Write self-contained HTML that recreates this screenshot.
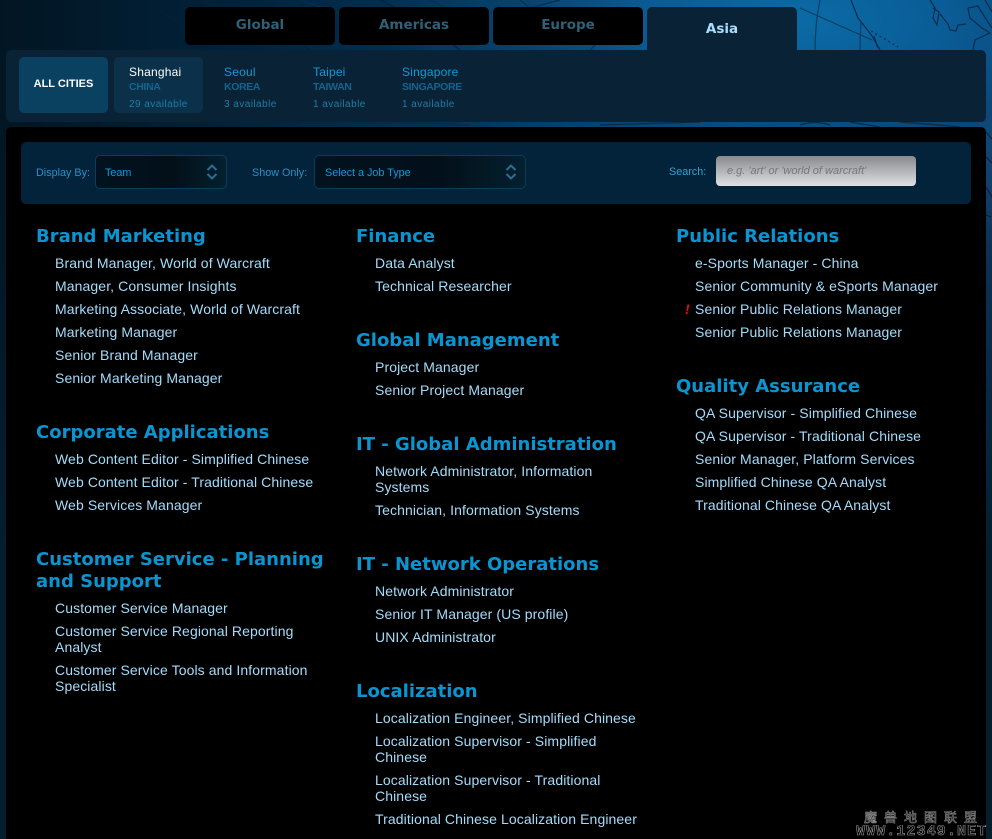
<!DOCTYPE html>
<html><head><meta charset="utf-8"><style>
*{box-sizing:border-box}
html,body{margin:0;padding:0;width:992px;height:839px;overflow:hidden}
body{background:#02111d;font-family:"Liberation Sans",sans-serif}
#w{position:absolute;left:0;top:0;width:992px;height:839px;overflow:hidden}
.a{position:absolute}
#bg{left:0;top:0;width:992px;height:839px;background:linear-gradient(rgba(3,22,38,0) 0,rgba(3,22,38,0) 130px,rgba(3,25,42,.5) 250px,rgba(4,30,46,1) 560px),radial-gradient(ellipse 420px 190px at 800px 20px,#0b6ba6 0%,#0a5c96 35%,rgba(8,70,115,.75) 65%,rgba(4,45,75,0) 100%),linear-gradient(90deg,#021522 0%,#01233c 25%,#02375c 50%,#084a7c 70%,#174a80 100%)}
.tab{position:absolute;top:7px;width:150px;height:38px;background:#000;border-radius:5px;text-align:center;font:bold 13.5px/37px "DejaVu Sans",sans-serif;color:#2f6078}
.asia{left:647px;height:43px;background:#0a2235;border-radius:5px 5px 0 0;color:#a9defc;line-height:44px}
#sub{left:6px;top:50px;width:980px;height:72px;background:#0a2235;border-radius:5px}
#all{left:19px;top:57px;width:89px;height:56px;background:#0a4060;border-radius:5px;color:#fff;font:bold 11px/55px "Liberation Sans",sans-serif;text-align:center}
#sel{left:114px;top:57px;width:89px;height:56px;background:#0b3049;border-radius:5px}
.c{position:absolute;top:65px;white-space:nowrap}
.c b{display:block;font:normal 12px/14px "Liberation Sans",sans-serif;color:#0a9bdc;letter-spacing:.2px}
.c i{display:block;font:normal bold 10.5px/14px "Liberation Sans",sans-serif;color:#14648c;margin-top:1px;letter-spacing:-.35px}
.c u{display:block;text-decoration:none;font:10px/14px "Liberation Sans",sans-serif;color:#1d7da6;margin-top:3.5px;letter-spacing:.45px}
#panel{left:6px;top:127px;width:980px;height:712px;background:#000;border-radius:5px 5px 0 0}
#bar{left:21px;top:142px;width:950px;height:62px;background:#02233a;border-radius:5px}
.l{position:absolute;font:10.8px/14px "Liberation Sans",sans-serif;color:#2a8fc4;white-space:nowrap}
.s{position:absolute;top:155px;height:34px;background:linear-gradient(90deg,#02121e,#03101a 60%,#04202f);border:1px solid #0b3d5a;border-radius:5px;color:#0a9be0;font:10.8px/34px "Liberation Sans",sans-serif;padding-left:10px}
.s svg{position:absolute;right:8px;top:7px}
#q{left:716px;top:156px;width:200px;height:30px;border-radius:4px;background:linear-gradient(#88898d,#e0e1e4);color:#73767a;font:italic 11px/31px "Liberation Sans",sans-serif;padding-left:11px}
.col{position:absolute;top:226px}
h3{margin:0;font:bold 18px/22px "DejaVu Sans",sans-serif;color:#0a95d1}
ul{list-style:none;margin:7px 0 29px;padding:0 0 0 19px}
li{font:14px/16px "Liberation Sans",sans-serif;color:#a3dcfb;margin:0;padding-bottom:7px;position:relative;letter-spacing:.1px}
li em{position:absolute;left:-10px;top:0;color:#e01010;font:italic bold 14px/16px "Liberation Sans",sans-serif}
#wm1{left:864px;top:810px;font:13px/14px "Noto Sans CJK SC",sans-serif;color:#000;-webkit-text-stroke:.6px #888;letter-spacing:7px;white-space:nowrap}
#wm2{left:856px;top:825px;font:bold 15px/14px "Liberation Mono",monospace;color:#000;-webkit-text-stroke:.6px #999;white-space:nowrap;letter-spacing:1.1px;width:132px;overflow:hidden}
</style></head><body><div id="w">
<div class="a" id="bg"></div>
<svg class="a" style="left:0;top:0" width="992" height="127" fill="none" stroke="#0b2c4c" stroke-width="1.2">
<path d="M800 8L872 40" stroke="#0a3d62"/>
<path d="M820 0Q815 25 815 50" stroke="#0a3d62"/>
<path d="M851 0L858 18L866 28L872 36L880 50"/>
<path d="M861 22Q860 36 860 50" stroke="#0a3d62"/>
<path d="M874 36L877 46L880 50" />
<path d="M871 31L898 47" stroke-dasharray="2 3"/>
<path d="M930 0L935 8L933 18L937 25L939 12L933 8M940 14L948 24L950 30L956 31L958 25L966 24"/>
<path d="M968 8L970 18L982 28L990 33L975 40L973 50M968 8L978 6L984 16L992 28"/>
<path d="M985 0L992 12"/>
<path d="M300 0L345 15M430 0L470 20M520 0L530 8L545 4L560 0M640 15L600 40L590 50" stroke="#063050"/>
<path d="M260 0Q280 30 310 50M380 0Q420 20 460 50M160 10Q190 30 210 50" stroke="#032238"/>
<path d="M300 125L400 122L470 125M600 125L700 122M800 125Q815 120 830 125M850 122L880 127M900 122Q930 124 960 127" stroke="#0a2a44"/>
</svg>
<svg class="a" style="left:986px;top:127px" width="6" height="100" fill="none" stroke="#1a1a2a"><path d="M0 5L6 12M0 30L6 36M0 60L6 70M0 88L5 90"/></svg>
<div class="tab" style="left:185px">Global</div>
<div class="tab" style="left:339px">Americas</div>
<div class="tab" style="left:493px">Europe</div>
<div class="tab asia">Asia</div>
<div class="a" id="sub"></div>
<div class="a" id="all">ALL CITIES</div>
<div class="a" id="sel"></div>
<div class="c" style="left:129px"><b style="color:#fff">Shanghai</b><i>CHINA</i><u>29 available</u></div>
<div class="c" style="left:224px"><b>Seoul</b><i>KOREA</i><u>3 available</u></div>
<div class="c" style="left:313px"><b>Taipei</b><i>TAIWAN</i><u>1 available</u></div>
<div class="c" style="left:402px"><b>Singapore</b><i>SINGAPORE</i><u>1 available</u></div>
<div class="a" id="panel"></div>
<div class="a" id="bar"></div>
<div class="l" style="left:36px;top:166px">Display By:</div>
<div class="s" style="left:95px;width:132px;padding-left:9px">Team<svg width="12" height="18" fill="none" stroke="#2a6f94" stroke-width="2"><path d="M1.5 7L6 2.5L10.500 7M1.500 11L6 15.500L10.500 11"/></svg></div>
<div class="l" style="left:252px;top:166px">Show Only:</div>
<div class="s" style="left:314px;width:212px">Select a Job Type<svg width="12" height="18" fill="none" stroke="#2a6f94" stroke-width="2"><path d="M1.5 7L6 2.5L10.500 7M1.500 11L6 15.500L10.500 11"/></svg></div>
<div class="l" style="left:669px;top:165px;color:#3a9fd0">Search:</div>
<div class="a" id="q">e.g. 'art' or 'world of warcraft'</div>

<div class="col" style="left:36px;width:300px">
<h3>Brand Marketing</h3>
<ul><li>Brand Manager, World of Warcraft</li><li>Manager, Consumer Insights</li><li>Marketing Associate, World of Warcraft</li><li>Marketing Manager</li><li>Senior Brand Manager</li><li>Senior Marketing Manager</li></ul>
<h3>Corporate Applications</h3>
<ul><li>Web Content Editor - Simplified Chinese</li><li>Web Content Editor - Traditional Chinese</li><li>Web Services Manager</li></ul>
<h3>Customer Service - Planning and Support</h3>
<ul><li>Customer Service Manager</li><li>Customer Service Regional Reporting Analyst</li><li>Customer Service Tools and Information Specialist</li></ul>
</div>
<div class="col" style="left:356px;width:290px">
<h3>Finance</h3>
<ul><li>Data Analyst</li><li>Technical Researcher</li></ul>
<h3>Global Management</h3>
<ul><li>Project Manager</li><li>Senior Project Manager</li></ul>
<h3>IT - Global Administration</h3>
<ul><li>Network Administrator, Information Systems</li><li>Technician, Information Systems</li></ul>
<h3>IT - Network Operations</h3>
<ul><li>Network Administrator</li><li>Senior IT Manager (US profile)</li><li>UNIX Administrator</li></ul>
<h3>Localization</h3>
<ul style="margin-bottom:0"><li>Localization Engineer, Simplified Chinese</li><li>Localization Supervisor - Simplified Chinese</li><li>Localization Supervisor - Traditional Chinese</li><li style="padding-bottom:0">Traditional Chinese Localization Engineer</li></ul>
</div>
<div class="col" style="left:676px;width:290px">
<h3>Public Relations</h3>
<ul><li>e-Sports Manager - China</li><li>Senior Community &amp; eSports Manager</li><li><em>!</em>Senior Public Relations Manager</li><li>Senior Public Relations Manager</li></ul>
<h3>Quality Assurance</h3>
<ul><li>QA Supervisor - Simplified Chinese</li><li>QA Supervisor - Traditional Chinese</li><li>Senior Manager, Platform Services</li><li>Simplified Chinese QA Analyst</li><li>Traditional Chinese QA Analyst</li></ul>
</div>
<div class="a" id="wm1">魔兽地图联盟</div>
<div class="a" id="wm2">WWW.12349.NET</div>
</div></body></html>
